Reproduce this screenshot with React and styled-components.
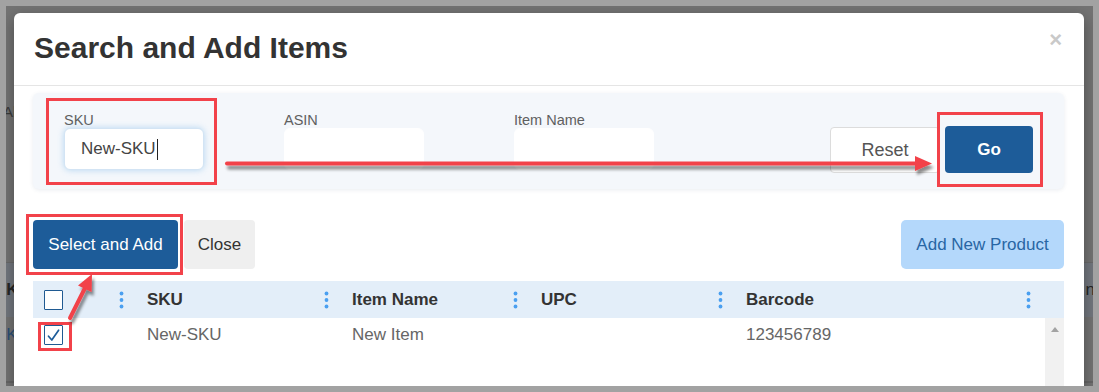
import React from "react";
import styled, { createGlobalStyle } from "styled-components";

const RED = "#f2424a";
const BLUE = "#1d5c99";

const GlobalStyle = createGlobalStyle`
  html, body {
    margin: 0;
    padding: 0;
  }
  body {
    font-family: "Liberation Sans", Arial, sans-serif;
    background: #a2a2a2;
  }
  * {
    box-sizing: border-box;
  }
`;

const columns = [
  { key: "check", width: 94 },
  { key: "sku", label: "SKU", width: 205 },
  { key: "name", label: "Item Name", width: 189 },
  { key: "upc", label: "UPC", width: 205 },
  { key: "barcode", label: "Barcode", width: 308 },
];

const rows = [{ id: 1, sku: "New-SKU", name: "New Item", upc: "", barcode: "123456789" }];

const gridTemplate = columns.map(c => `${c.width}px`).join(" ") + " 1fr";

const App = () => {
  return (
    <Frame>
      <GlobalStyle />
      <Stage>
        <BgPage>
          <BgLine>All</BgLine>
          <BgBand>
            <BgHead>SKU</BgHead>
            <BgHead>n</BgHead>
          </BgBand>
          <BgRow>SKU</BgRow>
          <BgRule />
        </BgPage>

        <Modal>
          <Header>
            <Title>Search and Add Items</Title>
            <CloseX>×</CloseX>
          </Header>

          <Body>
            <SearchPanel>
              <Field $w={220}>
                <Highlight $t={14} $r={13} $b={15} $l={18}>
                  <Label>SKU</Label>
                  <Input $focus>
                    New-SKU
                    <Caret />
                  </Input>
                </Highlight>
              </Field>
              <Field $w={230}>
                <Label>ASIN</Label>
                <Input />
              </Field>
              <Field $w={140}>
                <Label>Item Name</Label>
                <Input />
              </Field>
              <SearchButtons>
                <ResetButton>Reset</ResetButton>
                <Highlight $t={14} $r={10} $b={14} $l={8}>
                  <GoButton>Go</GoButton>
                </Highlight>
              </SearchButtons>
            </SearchPanel>

            <Actions>
              <ActionGroup>
                <Highlight $t={6} $r={5} $b={6} $l={7}>
                  <PrimaryButton>Select and Add</PrimaryButton>
                </Highlight>
                <GreyButton>Close</GreyButton>
              </ActionGroup>
              <LightButton>Add New Product</LightButton>
            </Actions>

            <Table>
              <HeadRow>
                {columns.map(c => (
                  <HeadCell key={c.key} $first={c.key === "check"}>
                    {c.key === "check" ? <Checkbox /> : <span>{c.label}</span>}
                    <Kebab />
                  </HeadCell>
                ))}
              </HeadRow>
              <TableBody>
                <Rows>
                  {rows.map(r => (
                    <Row key={r.id}>
                      <Cell $first>
                        <Highlight $t={3} $r={9} $b={6} $l={6}>
                          <Checkbox checked />
                        </Highlight>
                      </Cell>
                      <Cell>{r.sku}</Cell>
                      <Cell>{r.name}</Cell>
                      <Cell>{r.upc}</Cell>
                      <Cell>{r.barcode}</Cell>
                    </Row>
                  ))}
                </Rows>
                <Scrollbar>
                  <ScrollArrow />
                </Scrollbar>
              </TableBody>
            </Table>
          </Body>

          <Annotations width="1070" height="400" viewBox="0 0 1070 400">
            <defs>
              <filter id="arrowShadow" x="-20%" y="-200%" width="140%" height="500%">
                <feDropShadow dx="2" dy="4" stdDeviation="1.6" floodColor="#000" floodOpacity="0.45" />
              </filter>
            </defs>
            <g filter="url(#arrowShadow)" fill={RED} stroke={RED}>
              <line x1="213" y1="150.5" x2="904" y2="150.5" strokeWidth="4" strokeLinecap="round" />
              <polygon points="901,143 918,150.5 901,158" stroke="none" />
              <line x1="56" y1="305" x2="72" y2="273" strokeWidth="4" strokeLinecap="round" />
              <polygon points="78,261 77.6,279 64,272.5" stroke="none" />
            </g>
          </Annotations>
        </Modal>
      </Stage>
    </Frame>
  );
};

const Checkbox = ({ checked }) => (
  <CheckBox>
    {checked && (
      <svg width="15" height="15" viewBox="0 0 15 15">
        <path d="M2.5 8.2 L5.8 12 L12.6 2.2" fill="none" stroke={BLUE} strokeWidth="1.7" strokeLinecap="round" strokeLinejoin="round" />
      </svg>
    )}
  </CheckBox>
);

const Kebab = () => (
  <svg width="5" height="18" viewBox="0 0 5 18">
    <circle cx="2.5" cy="2.5" r="1.9" fill="#4a9ff0" />
    <circle cx="2.5" cy="9" r="1.9" fill="#4a9ff0" />
    <circle cx="2.5" cy="15.5" r="1.9" fill="#4a9ff0" />
  </svg>
);

export default App;

const Frame = styled.div`
  width: 1099px;
  height: 392px;
  padding: 6px;
  background: #a2a2a2;
  overflow: hidden;
`;

const Stage = styled.div`
  position: relative;
  height: 100%;
  background: #737373;
  overflow: hidden;
`;

const BgPage = styled.div`
  display: flex;
  flex-direction: column;
  padding-top: 98px;
  color: #262626;
  font-size: 17px;
`;

const BgLine = styled.div`
  height: 16px;
  line-height: 16px;
  font-size: 15px;
  margin-left: -3px;
  color: #3a3a3a;
`;

const BgBand = styled.div`
  display: flex;
  justify-content: space-between;
  align-items: center;
  margin-top: 142px;
  height: 55px;
  background: #72777e;
  border-top: 1px solid #6a6a6a;
`;

const BgHead = styled.span`
  font-weight: 700;
  margin-left: -11px;
  &:last-child {
    margin-left: 0;
    margin-right: -2px;
    font-weight: 400;
  }
`;

const BgRow = styled.div`
  height: 36px;
  line-height: 36px;
  margin-left: -11px;
  color: #2c4f78;
`;

const BgRule = styled.div`
  margin-top: 28px;
  height: 2px;
  background: #666;
`;

const Modal = styled.div`
  position: absolute;
  left: 8px;
  top: 7px;
  width: 1070px;
  height: 400px;
  background: #fff;
  border-radius: 6px;
  box-shadow: 0 5px 15px rgba(0, 0, 0, 0.35);
`;

const Header = styled.div`
  display: flex;
  justify-content: space-between;
  align-items: center;
  height: 73px;
  padding: 0 22px 2px 20px;
  border-bottom: 1px solid #e5e5e5;
`;

const Title = styled.h4`
  margin: 0;
  font-size: 30px;
  line-height: 30px;
  font-weight: 700;
  color: #333;
`;

const CloseX = styled.span`
  align-self: flex-start;
  margin-top: 16px;
  font-size: 22px;
  line-height: 22px;
  font-weight: 700;
  color: #c9c9c9;
`;

const Body = styled.div`
  padding: 7px 20px 0 19px;
`;

const SearchPanel = styled.div`
  display: flex;
  align-items: flex-end;
  height: 96px;
  padding: 19px 31px;
  background: #f4f7fb;
  border-radius: 6px;
  box-shadow: 0 1px 4px rgba(40, 70, 110, 0.1);
`;

const Field = styled.div`
  display: flex;
  flex-direction: column;
  width: ${({ $w }) => $w}px;
`;

const Highlight = styled.div`
  position: relative;
  display: flex;
  flex-direction: column;
  width: fit-content;

  &::after {
    content: "";
    position: absolute;
    top: -${({ $t }) => $t}px;
    right: -${({ $r }) => $r}px;
    bottom: -${({ $b }) => $b}px;
    left: -${({ $l }) => $l}px;
    border: 3px solid ${RED};
    pointer-events: none;
    z-index: 2;
  }
`;

const Label = styled.label`
  height: 16px;
  line-height: 16px;
  font-size: 14.5px;
  color: #606060;
`;

const Input = styled.div`
  display: flex;
  align-items: center;
  width: 140px;
  height: 42px;
  padding-left: 16px;
  background: #fff;
  border-radius: 6px;
  border: 1px solid ${({ $focus }) => ($focus ? "#d3e4f4" : "#fff")};
  box-shadow: ${({ $focus }) => ($focus ? "0 0 6px rgba(102, 175, 233, 0.45)" : "none")};
  font-size: 17px;
  color: #444;
`;

const Caret = styled.span`
  display: inline-block;
  width: 1.5px;
  height: 21px;
  margin-left: 1px;
  background: #222;
`;

const SearchButtons = styled.div`
  display: flex;
  align-items: flex-end;
  gap: 5px;
  margin-left: auto;
  margin-bottom: -3px;
`;

const ResetButton = styled.button`
  width: 110px;
  height: 46px;
  background: #fff;
  border: 1px solid #dcdcdc;
  border-radius: 4px;
  font-family: inherit;
  font-size: 18px;
  color: #555;
`;

const GoButton = styled.button`
  width: 88px;
  height: 47px;
  background: ${BLUE};
  border: none;
  border-radius: 4px;
  font-family: inherit;
  font-size: 17px;
  font-weight: 700;
  color: #fff;
`;

const Actions = styled.div`
  display: flex;
  justify-content: space-between;
  margin-top: 31px;
  width: 1031px;
`;

const ActionGroup = styled.div`
  display: flex;
  gap: 6px;
`;

const BaseButton = styled.button`
  height: 49px;
  border: none;
  border-radius: 4px;
  font-family: inherit;
  font-size: 17px;
`;

const PrimaryButton = styled(BaseButton)`
  width: 145px;
  background: ${BLUE};
  color: #fff;
`;

const GreyButton = styled(BaseButton)`
  width: 71px;
  background: #efefef;
  color: #333;
`;

const LightButton = styled(BaseButton)`
  width: 163px;
  background: #b4d8fb;
  color: #2866a4;
  border-radius: 5px;
`;

const Table = styled.div`
  margin-top: 12px;
  width: 1031px;
`;

const HeadRow = styled.div`
  display: grid;
  grid-template-columns: ${gridTemplate};
  height: 37px;
  background: #e3eef9;
`;

const HeadCell = styled.div`
  display: flex;
  justify-content: space-between;
  align-items: center;
  padding-left: ${({ $first }) => ($first ? 11 : 20)}px;
  padding-right: 3px;
  font-size: 17px;
  font-weight: 700;
  color: #333;
`;

const CheckBox = styled.span`
  display: flex;
  align-items: center;
  justify-content: center;
  width: 19px;
  height: 20px;
  background: #fff;
  border: 1.6px solid #1f5a92;
  border-radius: 1px;
`;

const TableBody = styled.div`
  display: flex;
  height: 80px;
`;

const Rows = styled.div`
  flex: 1;
`;

const Row = styled.div`
  display: grid;
  grid-template-columns: ${gridTemplate};
  height: 34px;
`;

const Cell = styled.div`
  display: flex;
  align-items: center;
  padding-left: ${({ $first }) => ($first ? 11 : 20)}px;
  font-size: 17px;
  color: #666;
`;

const Scrollbar = styled.div`
  display: flex;
  justify-content: center;
  width: 19px;
  padding-top: 9px;
  background: #f1f1f1;
`;

const ScrollArrow = styled.span`
  width: 0;
  height: 0;
  border-left: 4.5px solid transparent;
  border-right: 4.5px solid transparent;
  border-bottom: 5px solid #a3a3a3;
`;

const Annotations = styled.svg`
  position: absolute;
  left: 0;
  top: 0;
  pointer-events: none;
  z-index: 3;
`;
